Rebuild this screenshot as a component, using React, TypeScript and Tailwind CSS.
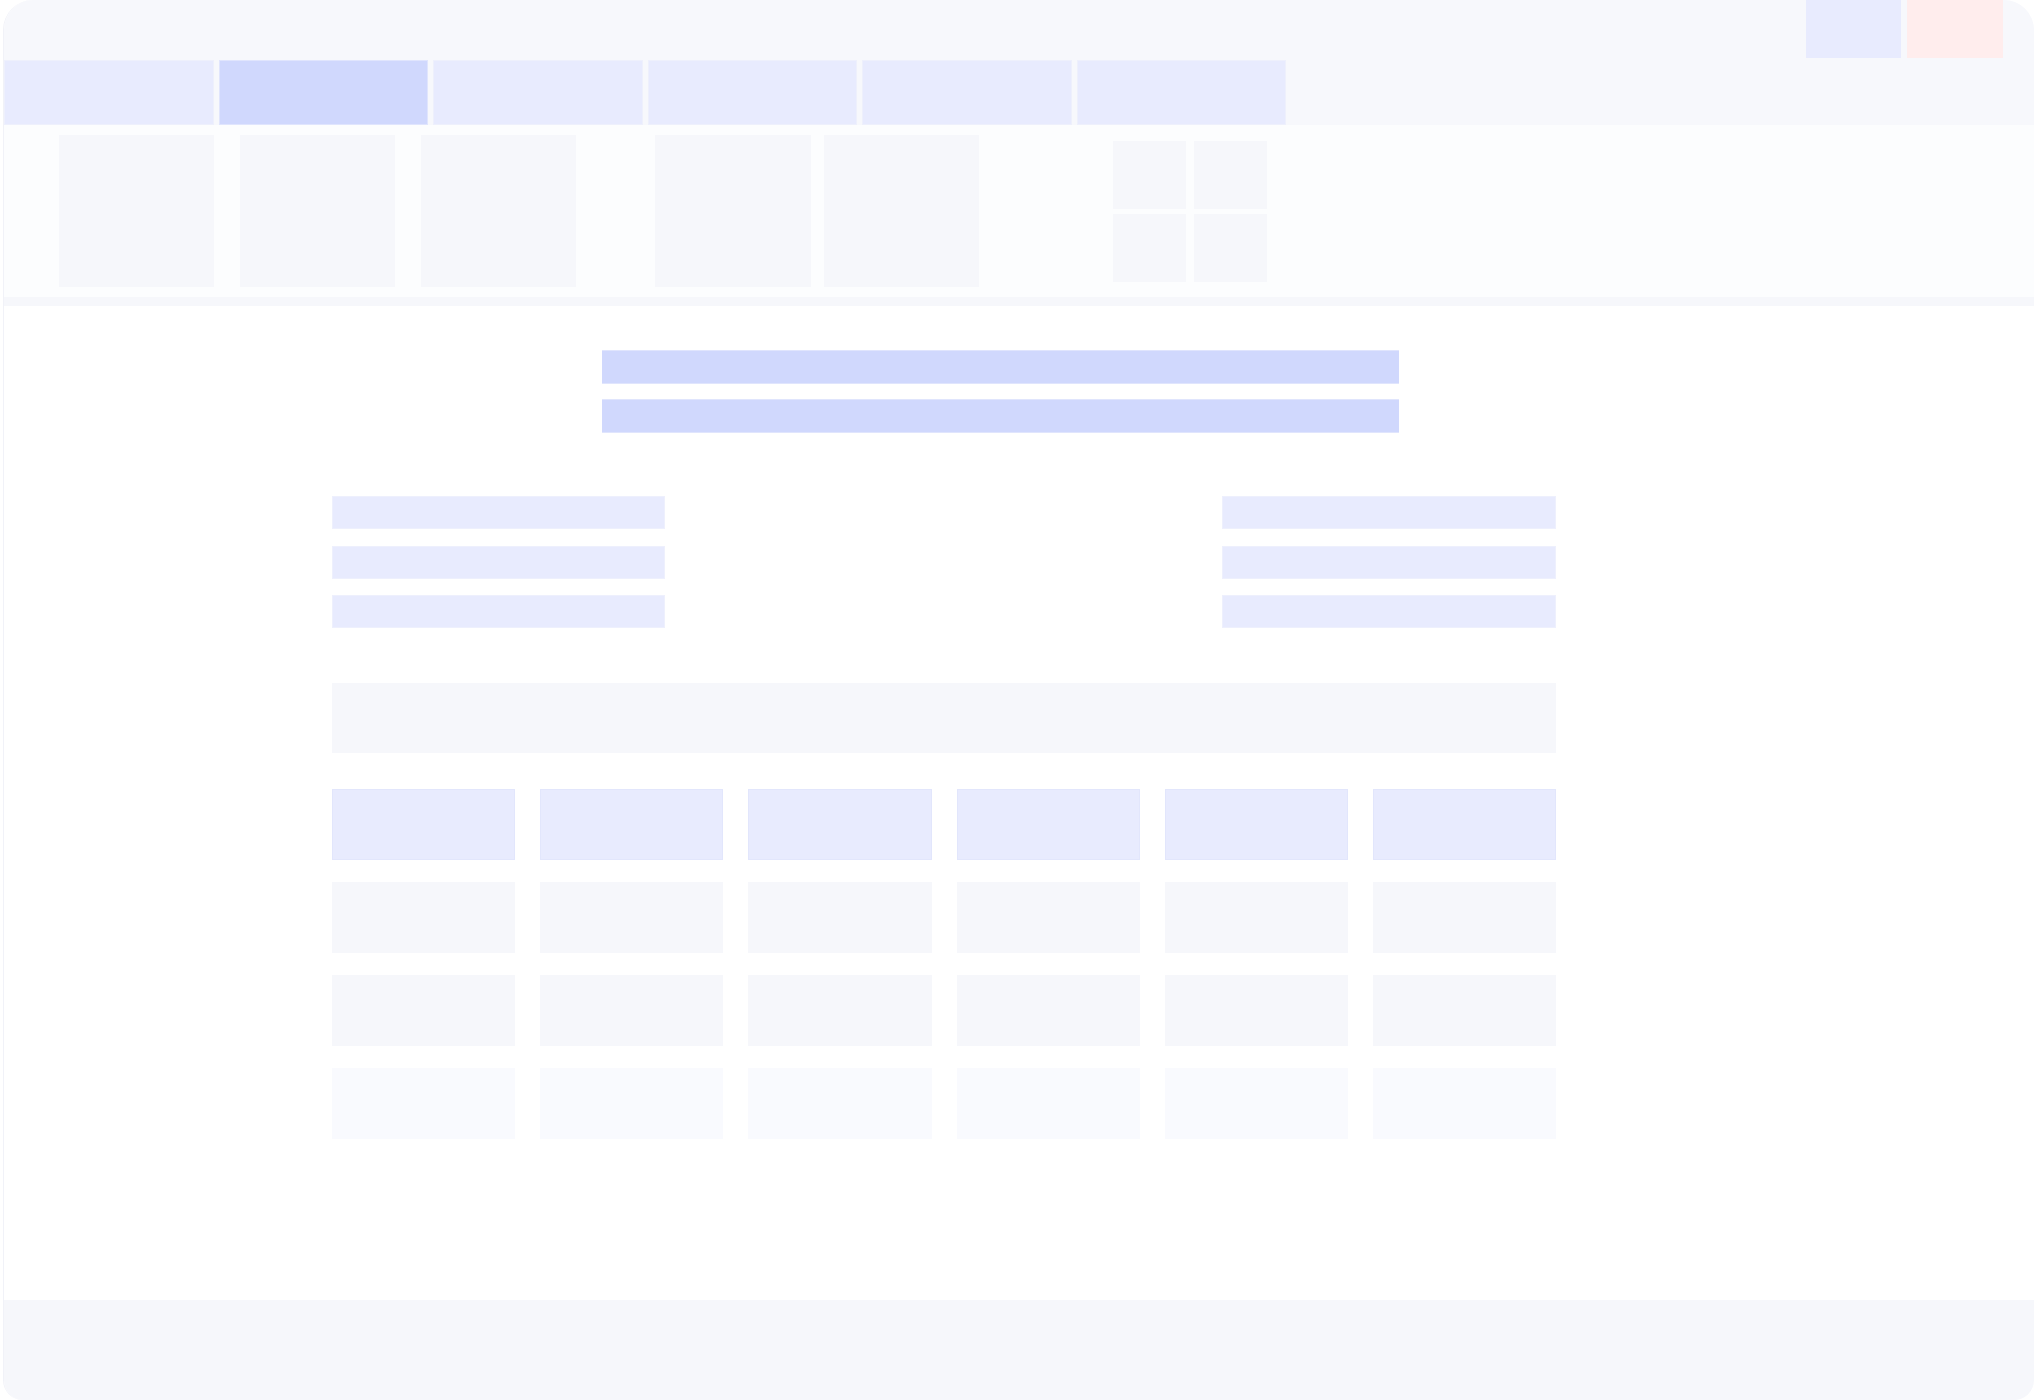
const tabs = [false, true, false, false, false, false];
const rowColors = ["bg-[#e8ebfe] border border-[#e2e6fc]", "bg-[#f6f7fb]", "bg-[#f6f7fb]", "bg-[#f9fafe]"];

function Block({ className }: { className: string }) {
  return <div className={className} />;
}

function ListBar() {
  return <div className="h-[33px] bg-[#e8ebfe] border border-[#eef0fd]" />;
}

export default function App() {
  return (
    <div className="w-[2035px] h-[1400px] bg-white overflow-hidden">
      <div className="ml-[3px] w-[2031px] h-[1400px] flex flex-col rounded-t-[30px] rounded-b-[20px] overflow-hidden border-l border-[#f1f2f8] bg-white">
        {/* title bar + tabs */}
        <div className="h-[125px] bg-[#f7f8fc] flex justify-between shrink-0">
          <div className="flex gap-[5px] self-end">
            {tabs.map((active, i) => (
              <div
                key={i}
                className={
                  active
                    ? "w-[209.5px] h-[65px] bg-[#d0d8fd] border border-[#e0e5fd]"
                    : "w-[209.5px] h-[65px] bg-[#e8ebfe] border border-[#eef0fc]"
                }
              />
            ))}
          </div>
          <div className="flex gap-[6px] self-start pr-[31px]">
            <div className="w-[95px] h-[58px] bg-[#e8ebfe]" />
            <div className="w-[96px] h-[58px] bg-[#ffeded]" />
          </div>
        </div>

        {/* toolbar */}
        <div className="h-[172px] bg-[#fcfdfe] flex items-center pl-[55px] shrink-0">
          <div className="flex gap-[26px]">
            <Block className="w-[155px] h-[152px] bg-[#f6f7fb]" />
            <Block className="w-[155px] h-[152px] bg-[#f6f7fb]" />
            <Block className="w-[155px] h-[152px] bg-[#f6f7fb]" />
          </div>
          <div className="flex gap-[13px] ml-[79px]">
            <Block className="w-[156px] h-[152px] bg-[#f6f7fb]" />
            <Block className="w-[155px] h-[152px] bg-[#f6f7fb]" />
          </div>
          <div className="grid grid-cols-2 gap-x-[8px] gap-y-[5px] ml-[134px]">
            {[0, 1, 2, 3].map((i) => (
              <Block key={i} className="w-[73px] h-[68px] bg-[#f6f7fb]" />
            ))}
          </div>
        </div>
        <div className="h-[9px] bg-[#f6f7fb] shrink-0" />

        {/* content */}
        <div className="flex-1 pl-[328px] pt-[44px]">
          <div className="w-[1224px]">
            <div className="ml-[270px] w-[797px] flex flex-col gap-[15px]">
              <div className="h-[34px] bg-[#d0d8fd] border-y border-[#e0e5fd]" />
              <div className="h-[34px] bg-[#d0d8fd] border-y border-[#e0e5fd]" />
            </div>

            <div className="mt-[63px] flex justify-between">
              <div className="w-[333px] flex flex-col gap-[16.5px]">
                <ListBar />
                <ListBar />
                <ListBar />
              </div>
              <div className="w-[334px] flex flex-col gap-[16.5px]">
                <ListBar />
                <ListBar />
                <ListBar />
              </div>
            </div>

            <div className="mt-[55px] h-[70px] bg-[#f6f7fb]" />

            <div className="mt-[36px] grid grid-cols-6 gap-x-[25px] gap-y-[22px]">
              {rowColors.map((c, r) =>
                [0, 1, 2, 3, 4, 5].map((i) => <div key={r + "-" + i} className={"h-[71px] " + c} />)
              )}
            </div>
          </div>
        </div>

        {/* footer */}
        <div className="h-[100px] bg-[#f6f7fb] shrink-0" />
      </div>
    </div>
  );
}
